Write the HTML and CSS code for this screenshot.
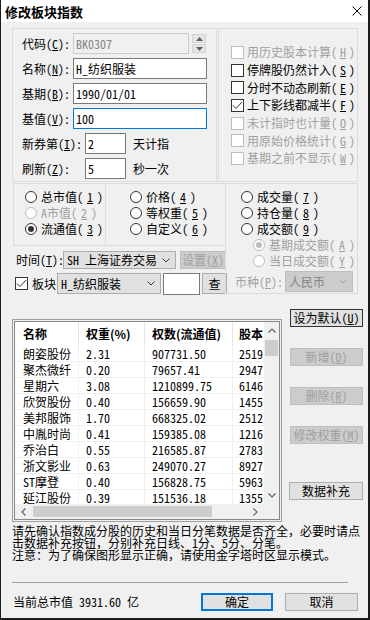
FILE: index.html
```html
<!DOCTYPE html>
<html lang="zh-CN">
<head>
  <meta charset="UTF-8" />
  <title>修改板块指数</title>
  <link rel="stylesheet" href="styles.css">
</head>
<body>
  <div class="window">
    <div class="titlebar">
      <span class="title">修改板块指数</span>
      <svg class="close" width="10" height="10" viewBox="0 0 10 10"><path d="M0.5 0.5L9.5 9.5M9.5 0.5L0.5 9.5" stroke="#000" stroke-width="1" fill="none"/></svg>
    </div>

    <div class="content">
      <div class="row-top">
        <div class="panel panel-basic">
          <div class="field">
            <span class="lbl">代码(<u>C</u>):</span>
            <div class="box box-code disabled">BK0307</div>
            <div class="spin">
              <div class="spin-btn"><svg width="7" height="4" viewBox="0 0 7 4"><path d="M0 4L3.5 0L7 4Z" fill="#606060"/></svg></div>
              <div class="spin-btn"><svg width="7" height="4" viewBox="0 0 7 4"><path d="M0 0L3.5 4L7 0Z" fill="#606060"/></svg></div>
            </div>
          </div>
          <div class="field"><span class="lbl">名称(<u>N</u>):</span><div class="box box-wide">H_纺织服装</div></div>
          <div class="field"><span class="lbl">基期(<u>B</u>):</span><div class="box box-wide">1990/01/01</div></div>
          <div class="field"><span class="lbl">基值(<u>V</u>):</span><div class="box box-wide focus">100</div></div>
          <div class="field"><span class="lbl lbl-long">新券第(<u>I</u>):</span><div class="box box-num">2</div><span class="unit">天计指</span></div>
          <div class="field"><span class="lbl lbl-long">刷新(<u>Z</u>):</span><div class="box box-num">5</div><span class="unit">秒一次</span></div>
        </div>

        <div class="panel panel-opts">
          <div class="check disabled"><span class="cb"></span>用历史股本计算(<u>H</u>)</div>
          <div class="check"><span class="cb"></span>停牌股仍然计入(<u>S</u>)</div>
          <div class="check"><span class="cb"></span>分时不动态刷新(<u>E</u>)</div>
          <div class="check"><span class="cb"><svg width="11" height="11" viewBox="0 0 11 11"><path d="M1 5.5L4 8.5L10 2" stroke="#333" stroke-width="1" fill="none"/></svg></span>上下影线都减半(<u>F</u>)</div>
          <div class="check disabled"><span class="cb"></span>未计指时也计量(<u>O</u>)</div>
          <div class="check disabled"><span class="cb"></span>用原始价格统计(<u>G</u>)</div>
          <div class="check disabled"><span class="cb"></span>基期之前不显示(<u>W</u>)</div>
        </div>
      </div>

      <div class="row-mid">
        <div class="mid-left">
          <div class="radio-group">
            <div class="rcol rcol-1">
              <div class="radio"><span class="rb"></span>总市值(<u>1</u>)</div>
              <div class="radio disabled"><span class="rb"></span>A市值(<u>2</u>)</div>
              <div class="radio"><span class="rb on"></span>流通值(<u>3</u>)</div>
            </div>
            <div class="rcol rcol-2">
              <div class="radio"><span class="rb"></span>价格(<u>4</u>)</div>
              <div class="radio"><span class="rb"></span>等权重(<u>5</u>)</div>
              <div class="radio"><span class="rb"></span>自定义(<u>6</u>)</div>
            </div>
          </div>

          <div class="tool-row time-row">
            <span class="lbl">时间(<u>T</u>):</span>
            <div class="select sel-market">SH 上海证券交易<svg width="8" height="5" viewBox="0 0 8 5"><path d="M0.5 0.5L4 4L7.5 0.5" stroke="#333" fill="none"/></svg></div>
            <div class="btn btn-set disabled">设置(<u>X</u>)</div>
          </div>

          <div class="tool-row board-row">
            <span class="cb"><svg width="11" height="11" viewBox="0 0 11 11"><path d="M1 5.5L4 8.5L10 2" stroke="#333" stroke-width="1" fill="none"/></svg></span>
            <span class="lbl">板块</span>
            <div class="select sel-board">H_纺织服装<svg width="8" height="5" viewBox="0 0 8 5"><path d="M0.5 0.5L4 4L7.5 0.5" stroke="#333" fill="none"/></svg></div>
            <div class="box box-find"></div>
            <div class="btn btn-find">查</div>
          </div>
        </div>

        <div class="panel panel-vol">
          <div class="radio"><span class="rb"></span>成交量(<u>7</u>)</div>
          <div class="radio"><span class="rb"></span>持仓量(<u>8</u>)</div>
          <div class="radio"><span class="rb"></span>成交额(<u>9</u>)</div>
          <div class="radio sub disabled"><span class="rb on"></span>基期成交额(<u>A</u>)</div>
          <div class="radio sub disabled"><span class="rb"></span>当日成交额(<u>Y</u>)</div>
          <div class="currency disabled">
            <span class="lbl">币种(<u>P</u>):</span>
            <div class="select sel-cur disabled">人民币<svg width="8" height="5" viewBox="0 0 8 5"><path d="M0.5 0.5L4 4L7.5 0.5" stroke="#a0a0a0" fill="none"/></svg></div>
          </div>
        </div>
      </div>

      <div class="list-row">
        <div class="frame">
          <div class="list">
            <div class="grid">
              <div class="tr th">
                <div class="td c1">名称</div><div class="td c2">权重(%)</div><div class="td c3">权数(流通值)</div><div class="td c4">股本</div>
              </div>
              <div class="tr"><div class="td c1">朗姿股份</div><div class="td c2">2.31</div><div class="td c3">907731.50</div><div class="td c4">2519</div></div>
              <div class="tr"><div class="td c1">聚杰微纤</div><div class="td c2">0.20</div><div class="td c3">79657.41</div><div class="td c4">2947</div></div>
              <div class="tr"><div class="td c1">星期六</div><div class="td c2">3.08</div><div class="td c3">1210899.75</div><div class="td c4">6146</div></div>
              <div class="tr"><div class="td c1">欣贺股份</div><div class="td c2">0.40</div><div class="td c3">156659.90</div><div class="td c4">1455</div></div>
              <div class="tr"><div class="td c1">美邦服饰</div><div class="td c2">1.70</div><div class="td c3">668325.02</div><div class="td c4">2512</div></div>
              <div class="tr"><div class="td c1">中胤时尚</div><div class="td c2">0.41</div><div class="td c3">159385.08</div><div class="td c4">1216</div></div>
              <div class="tr"><div class="td c1">乔治白</div><div class="td c2">0.55</div><div class="td c3">216585.87</div><div class="td c4">2783</div></div>
              <div class="tr"><div class="td c1">浙文影业</div><div class="td c2">0.63</div><div class="td c3">249070.27</div><div class="td c4">8927</div></div>
              <div class="tr"><div class="td c1">ST摩登</div><div class="td c2">0.40</div><div class="td c3">156828.75</div><div class="td c4">5963</div></div>
              <div class="tr"><div class="td c1">延江股份</div><div class="td c2">0.39</div><div class="td c3">151536.18</div><div class="td c4">1355</div></div>
            </div>
            <div class="vscroll">
              <div class="arrow"><svg width="8" height="5" viewBox="0 0 8 5"><path d="M0.5 4.5L4 1L7.5 4.5" stroke="#606060" stroke-width="1.2" fill="none"/></svg></div>
              <div class="vthumb"></div>
              <div class="spacer"></div>
              <div class="arrow"><svg width="8" height="5" viewBox="0 0 8 5"><path d="M0.5 0.5L4 4L7.5 0.5" stroke="#606060" stroke-width="1.2" fill="none"/></svg></div>
            </div>
            <div class="hscroll">
              <div class="harrow"><svg width="5" height="8" viewBox="0 0 5 8"><path d="M4.5 0.5L1 4L4.5 7.5" stroke="#606060" stroke-width="1.2" fill="none"/></svg></div>
              <div class="hthumb"></div>
              <div class="spacer"></div>
              <div class="harrow"><svg width="5" height="8" viewBox="0 0 5 8"><path d="M0.5 0.5L4 4L0.5 7.5" stroke="#606060" stroke-width="1.2" fill="none"/></svg></div>
            </div>
            <div class="corner"></div>
          </div>
        </div>

        <div class="side">
          <div class="btn btn-default">设为默认(<u>U</u>)</div>
          <div class="btn disabled">新增(<u>D</u>)</div>
          <div class="btn disabled">删除(<u>R</u>)</div>
          <div class="btn disabled">修改权重(<u>M</u>)</div>
          <div class="btn btn-fill">数据补充</div>
        </div>
      </div>

      <div class="notes">
        <div class="note-line">请先确认指数成分股的历史和当日分笔数据是否齐全，必要时请点</div>
        <div class="note-line">击数据补充按钮，分别补充日线、1分、5分、分笔。</div>
        <div class="note-line">注意：为了确保图形显示正确，请使用金字塔时区显示模式。</div>
      </div>

      <div class="separator"></div>

      <div class="footer">
        <span class="total">当前总市值 3931.60 亿</span>
        <div class="btn btn-ok">确定</div>
        <div class="btn btn-cancel">取消</div>
      </div>
    </div>
  </div>
</body>
</html>
```

FILE: styles.css
```css
* {
  box-sizing: border-box;
}

body {
  margin: 0;
  background: #1c1c1c;
  font-family: "Noto Sans Mono CJK SC", "Noto Sans CJK SC", monospace;
  font-size: 12px;
  line-height: 1;
  color: #000;
}

u {
  text-underline-offset: 1px;
}

.window {
  width: 367px;
  height: 618px;
  margin-left: 1px;
  background: #f0f0f0;
}

.titlebar {
  height: 22px;
  background: #fff;
  display: flex;
  align-items: center;
  justify-content: space-between;
  padding: 0 6px 0 4px;
}

.title {
  font-family: "Noto Sans CJK SC", sans-serif;
  font-weight: bold;
  font-size: 13px;
}

.content {
  padding: 6px 0 0 11px;
}

/* top: basic fields + option checkboxes */
.row-top {
  display: flex;
  gap: 1px;
  height: 154px;
}

.panel {
  border: 1px solid #dcdcdc;
}

.panel-basic {
  width: 205px;
  padding: 4px 0 0 9px;
  display: flex;
  flex-direction: column;
  gap: 4px;
}

.field {
  display: flex;
  align-items: center;
  height: 21px;
  flex-shrink: 0;
}

.lbl {
  width: 51px;
  flex-shrink: 0;
  white-space: nowrap;
}

.lbl-long {
  width: 63px;
}

.box {
  height: 21px;
  background: #fff;
  border: 1px solid #7a7a7a;
  padding-left: 2px;
  display: flex;
  align-items: center;
  flex-shrink: 0;
}

.box-code {
  width: 116px;
}

.box.disabled {
  background: #f0f0f0;
  border-color: #cccccc;
  color: #838383;
}

.box-wide {
  width: 134px;
}

.box.focus {
  border-color: #0078d7;
}

.box-num {
  width: 41px;
}

.unit {
  margin-left: 7px;
}

.spin {
  align-self: flex-start;
  margin: 1px 0 0 3px;
  display: flex;
  flex-direction: column;
  gap: 1px;
}

.spin-btn {
  width: 14px;
  height: 9px;
  background: #e5e5e5;
  border: 1px solid #d4d4d4;
  display: flex;
  align-items: center;
  justify-content: center;
}

.panel-opts {
  width: 140px;
  padding: 14.5px 0 0 12px;
}

.check {
  display: flex;
  align-items: center;
  gap: 3px;
  height: 17.7px;
  white-space: nowrap;
}

.cb {
  width: 13px;
  height: 13px;
  border: 1px solid #333;
  background: #fff;
  flex-shrink: 0;
  display: flex;
  align-items: center;
  justify-content: center;
}

.disabled {
  color: #a0a0a0;
}

.check.disabled .cb {
  border-color: #bcbcbc;
}

/* middle: weighting radios, time, board */
.row-mid {
  display: flex;
  margin-top: 1px;
  height: 111px;
}

.mid-left {
  width: 212px;
  margin-left: 1px;
}

.radio-group {
  display: flex;
  height: 63px;
  border: 1px solid #dcdcdc;
  border-right: 0;
}

.rcol {
  padding-top: 5px;
}

.rcol-1 {
  width: 91px;
  padding-left: 11px;
}

.rcol-2 {
  flex: 1;
  border-left: 1px solid #dcdcdc;
  padding-left: 24px;
}

.radio {
  display: flex;
  align-items: center;
  gap: 4px;
  height: 16px;
  white-space: nowrap;
}

.rb {
  width: 12px;
  height: 12px;
  border-radius: 50%;
  border: 1px solid #333;
  background: #fff;
  flex-shrink: 0;
  display: flex;
  align-items: center;
  justify-content: center;
}

.rb.on::after {
  content: "";
  width: 6px;
  height: 6px;
  border-radius: 50%;
  background: #333;
}

.radio.disabled .rb {
  border-color: #bcbcbc;
}

.radio.disabled .rb.on::after {
  background: #bcbcbc;
}

.tool-row {
  display: flex;
  align-items: center;
  white-space: nowrap;
}

.time-row {
  margin-top: 5px;
  height: 18px;
  padding-left: 3px;
}

.time-row .lbl {
  width: 47px;
}

.select {
  height: 18px;
  background: #e1e1e1;
  border: 1px solid #adadad;
  display: flex;
  align-items: center;
  justify-content: space-between;
  padding: 0 5px 0 3px;
  flex-shrink: 0;
  white-space: nowrap;
}

.select.disabled {
  background: #cccccc;
  border-color: #bfbfbf;
  color: #838383;
}

.sel-market {
  width: 113px;
}

.btn {
  height: 18px;
  background: #e1e1e1;
  border: 1px solid #adadad;
  display: flex;
  align-items: center;
  justify-content: center;
  flex-shrink: 0;
  white-space: nowrap;
}

.btn.disabled {
  background: #cccccc;
  border-color: #bfbfbf;
  color: #a0a0a0;
}

.btn-set {
  width: 46px;
  margin-left: 4px;
}

.board-row {
  margin-top: 4px;
  height: 21px;
  padding-left: 2px;
}

.board-row .cb {
  margin-right: 4px;
}

.board-row .lbl {
  width: 25px;
}

.sel-board {
  width: 104px;
  height: 21px;
}

.box-find {
  width: 37px;
  height: 22px;
  margin-left: 2px;
}

.btn-find {
  width: 25px;
  height: 21px;
  margin-left: 2px;
}

.panel-vol {
  width: 133px;
  height: 111px;
  padding: 5px 0 0 15px;
}

.sub {
  padding-left: 12px;
}

.currency {
  display: flex;
  align-items: center;
  height: 21px;
  margin: 2px 0 0 -6px;
}

.currency .lbl {
  width: 50px;
}

.sel-cur {
  width: 68px;
  height: 21px;
}

/* component list */
.list-row {
  display: flex;
  margin-top: 15px;
  height: 213px;
}

.frame {
  width: 270px;
  height: 203px;
  margin-top: 10px;
  border: 1px solid #a0a0a0;
  padding: 1px;
  flex-shrink: 0;
}

.list {
  height: 100%;
  border: 1px solid #828790;
  background: #fff;
  display: grid;
  grid-template-columns: 1fr 15px;
  grid-template-rows: 1fr 15px;
  overflow: hidden;
}

.grid {
  overflow: hidden;
}

.tr {
  display: flex;
  height: 16px;
}

.th {
  height: 24px;
  font-family: "Noto Sans CJK SC", sans-serif;
  font-weight: bold;
}

.td {
  flex-shrink: 0;
  padding-left: 7px;
  border-right: 1px solid #f0f0f0;
  border-bottom: 1px solid #f0f0f0;
  display: flex;
  align-items: center;
  white-space: nowrap;
  overflow: hidden;
}

.th .td {
  border-right-color: #e5e5e5;
  border-bottom: 0;
}

.c1 { width: 64px; padding-left: 8px; }
.c2 { width: 66px; }
.c3 { width: 88px; }
.c4 { width: 80px; padding-left: 6px; }

.vscroll {
  background: #f0f0f0;
  display: flex;
  flex-direction: column;
  align-items: center;
}

.arrow {
  width: 100%;
  height: 17px;
  display: flex;
  align-items: center;
  justify-content: center;
  flex-shrink: 0;
}

.vthumb {
  width: 13px;
  height: 16px;
  margin-top: 1px;
  background: #cdcdcd;
}

.spacer {
  flex: 1;
}

.hscroll {
  background: #f0f0f0;
  display: flex;
  align-items: center;
}

.harrow {
  width: 17px;
  height: 100%;
  display: flex;
  align-items: center;
  justify-content: center;
  flex-shrink: 0;
}

.hthumb {
  width: 179px;
  height: 11px;
  margin-left: 1px;
  background: #cdcdcd;
}

.corner {
  background: #f0f0f0;
}

.side {
  width: 73px;
  margin-left: 8px;
  display: flex;
  flex-direction: column;
  gap: 21px;
}

.btn-default {
  border-color: #333;
}

.btn-fill {
  width: 74px;
  margin: 17px 0 0 -1px;
}

/* bottom */
.notes {
  margin-top: 3px;
  white-space: nowrap;
}

.note-line {
  height: 12px;
  display: flex;
  align-items: center;
}

.separator {
  width: 336px;
  margin-top: 21px;
  border-top: 1px solid #a0a0a0;
}

.footer {
  width: 346px;
  margin-top: 10px;
  display: flex;
  align-items: center;
  height: 18px;
}

.total {
  flex: 1;
  padding-left: 1px;
}

.btn-ok {
  width: 72px;
  border: 2px solid #0078d7;
}

.btn-cancel {
  width: 73px;
  margin-left: 12px;
}
```
